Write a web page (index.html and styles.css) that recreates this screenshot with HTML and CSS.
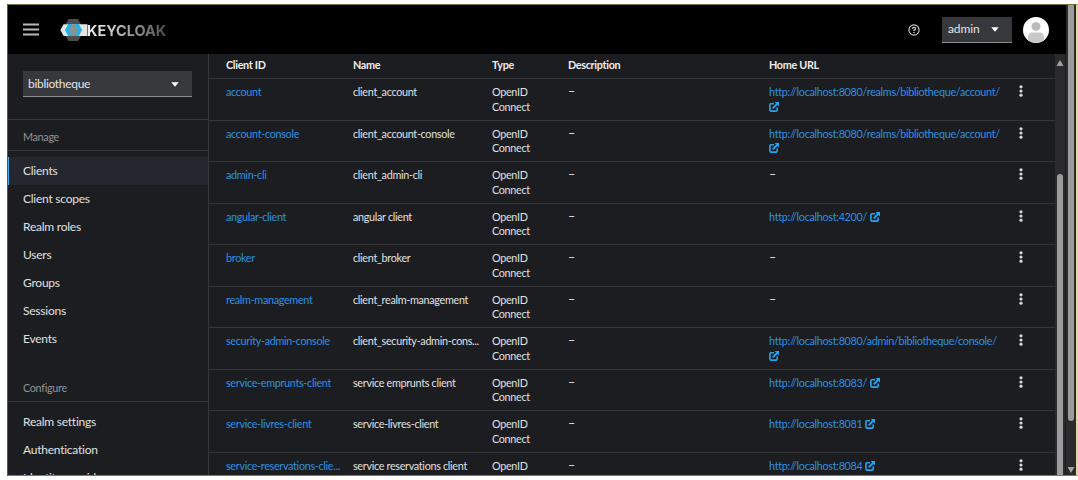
FILE: index.html
```
<!DOCTYPE html>
<html lang="en">
<head>
<meta charset="utf-8">
<title>Keycloak Administration Console</title>
<link rel="stylesheet" href="styles.css">
</head>
<body>
<svg width="0" height="0" class="defs" aria-hidden="true">
  <symbol id="ext" viewBox="0 0 10 10"><path d="M5 1.8H1.9Q.9 1.8 .9 2.8V8.1Q.9 9.1 1.9 9.1H7.2Q8.2 9.1 8.2 8.1V5.6" fill="none" stroke="currentColor" stroke-width="1.6"/><path d="M3.7 6.3L8 2" stroke="currentColor" stroke-width="1.8"/><path d="M5.6 0H10V4.4Z" fill="currentColor"/></symbol>
  <symbol id="kebab" viewBox="0 0 4 12"><circle cx="2" cy="1.8" r="1.6" fill="currentColor"/><circle cx="2" cy="6" r="1.6" fill="currentColor"/><circle cx="2" cy="10.2" r="1.6" fill="currentColor"/></symbol>
  <symbol id="caret" viewBox="0 0 8 5"><path d="M.3 .3H7.7L4 4.7Z" fill="currentColor"/></symbol>
</svg>
<div class="window">
  <div class="app">
    <header class="masthead">
      <svg class="burger" viewBox="0 0 16 14"><path d="M0 1.5H16M0 6.5H16M0 11.5H16" stroke="#b9b9b9" stroke-width="1.9"/></svg>
      <div class="brand">
        <svg class="mark" viewBox="0 0 28 22"><path d="M8.5 0H18L23 9V13L18 22H8.5L3.6 13V9Z" fill="#4d4d4d"/><path d="M3.6 5.2H27.5V17H3.6L.4 11Z" fill="#e4e4e4"/><path d="M10 5.2H19L22 11L19 17H10L7 11Z" fill="#8b9295"/><path d="M8.2 5H12L8.8 11L12 17H8.2L5 11Z" fill="#1fb4e6"/><path d="M14.5 5H18.3L21.6 11L18.3 17H14.5L17.8 11Z" fill="#1fb4e6"/></svg>
        <span class="wordmark">KEYCLOAK</span>
      </div>
      <svg class="help" viewBox="0 0 12 12"><circle cx="6" cy="6" r="5.1" fill="none" stroke="#d2d2d2" stroke-width="1.1"/><path d="M4.4 4.8Q4.5 3.4 6 3.4Q7.6 3.4 7.6 4.7Q7.6 5.6 6 6.1V7" fill="none" stroke="#d2d2d2" stroke-width="1.2"/><circle cx="6" cy="8.5" r=".8" fill="#d2d2d2"/></svg>
      <div class="select user"><span>admin</span><svg class="caret"><use href="#caret"/></svg></div>
      <svg class="avatar" viewBox="0 0 26 26"><circle cx="13" cy="13" r="13" fill="#fff"/><circle cx="13" cy="9.4" r="4.5" fill="#b9bbbd"/><path d="M5 23.2V20.2Q5 15.4 9.5 15.4H16.5Q21 15.4 21 20.2V23.2Q17.5 26 13 26T5 23.2Z" fill="#c6c8ca"/></svg>
    </header>
    <div class="body">
      <nav class="sidebar">
        <div class="realm"><div class="select"><span>bibliotheque</span><svg class="caret"><use href="#caret"/></svg></div></div>
        <h2 class="group">Manage</h2>
        <ul class="links">
          <li class="current">Clients</li><li>Client scopes</li><li>Realm roles</li><li>Users</li><li>Groups</li><li>Sessions</li><li>Events</li>
        </ul>
        <h2 class="group configure">Configure</h2>
        <ul class="links">
          <li>Realm settings</li><li>Authentication</li><li>Identity providers</li>
        </ul>
      </nav>
      <main class="table">
        <div class="row head"><span>Client ID</span><span>Name</span><span>Type</span><span>Description</span><span>Home URL</span><span></span></div>
        <div class="row"><a>account</a><span>client_account</span><span>OpenID Connect</span><span class="dash">–</span><span class="url"><a>http://localhost:8080/realms/bibliotheque/account/</a> <svg class="ext"><use href="#ext"/></svg></span><svg class="kebab"><use href="#kebab"/></svg></div>
        <div class="row"><a>account-console</a><span>client_account-console</span><span>OpenID Connect</span><span class="dash">–</span><span class="url"><a>http://localhost:8080/realms/bibliotheque/account/</a> <svg class="ext"><use href="#ext"/></svg></span><svg class="kebab"><use href="#kebab"/></svg></div>
        <div class="row"><a>admin-cli</a><span>client_admin-cli</span><span>OpenID Connect</span><span class="dash">–</span><span class="dash">–</span><svg class="kebab"><use href="#kebab"/></svg></div>
        <div class="row"><a>angular-client</a><span>angular client</span><span>OpenID Connect</span><span class="dash">–</span><span class="url"><a>http://localhost:4200/</a> <svg class="ext"><use href="#ext"/></svg></span><svg class="kebab"><use href="#kebab"/></svg></div>
        <div class="row"><a>broker</a><span>client_broker</span><span>OpenID Connect</span><span class="dash">–</span><span class="dash">–</span><svg class="kebab"><use href="#kebab"/></svg></div>
        <div class="row"><a>realm-management</a><span>client_realm-management</span><span>OpenID Connect</span><span class="dash">–</span><span class="dash">–</span><svg class="kebab"><use href="#kebab"/></svg></div>
        <div class="row"><a>security-admin-console</a><span>client_security-admin-cons...</span><span>OpenID Connect</span><span class="dash">–</span><span class="url"><a>http://localhost:8080/admin/bibliotheque/console/</a> <svg class="ext"><use href="#ext"/></svg></span><svg class="kebab"><use href="#kebab"/></svg></div>
        <div class="row"><a>service-emprunts-client</a><span>service emprunts client</span><span>OpenID Connect</span><span class="dash">–</span><span class="url"><a>http://localhost:8083/</a> <svg class="ext"><use href="#ext"/></svg></span><svg class="kebab"><use href="#kebab"/></svg></div>
        <div class="row"><a>service-livres-client</a><span>service-livres-client</span><span>OpenID Connect</span><span class="dash">–</span><span class="url"><a>http://localhost:8081</a> <svg class="ext"><use href="#ext"/></svg></span><svg class="kebab"><use href="#kebab"/></svg></div>
        <div class="row"><a>service-reservations-clie...</a><span>service reservations client</span><span>OpenID</span><span class="dash">–</span><span class="url"><a>http://localhost:8084</a> <svg class="ext"><use href="#ext"/></svg></span><svg class="kebab"><use href="#kebab"/></svg></div>
      </main>
      <div class="scroll inner"><svg class="arrow" viewBox="0 0 8 6"><path d="M4 0L7.5 6H.5Z" fill="#a0a0a0"/></svg><div class="thumb"></div></div>
    </div>
  </div>
  <div class="scroll outer"><div class="thumb"></div><svg class="arrow" viewBox="0 0 8 6"><path d="M4 6L7.5 0H.5Z" fill="#a0a0a0"/></svg></div>
</div>
</body>
</html>
```
FILE: styles.css
```
* { box-sizing: border-box; }
body { margin: 0; width: 1078px; height: 480px; overflow: hidden; padding: 4px 0 0 7px; background: #fff; color: #e0e0e0; font-family: Lato, "Open Sans", sans-serif; font-size: 10.8px; line-height: 14.5px; letter-spacing: -.31px; }
.defs { position: absolute; }
svg { display: block; }
.window { display: flex; width: 1071px; height: 472px; overflow: hidden; background: #1b1d21; border-top: 1px solid #77743e; border-left: 1px solid #55575a; border-right: 2px solid #e5d3a2; border-bottom: 1px solid #77797b; }
.app { display: flex; flex-direction: column; width: 1058px; flex: none; }
.masthead { display: flex; align-items: center; height: 49px; flex: none; padding: 0 18px 0 15px; background: #000; }
.burger { width: 16px; height: 14px; }
.brand { display: flex; align-items: center; margin-left: 21px; }
.mark { width: 28px; height: 22px; }
.wordmark { margin-left: -1px; padding-top: 2px; font-family: Inter, sans-serif; font-size: 14.5px; font-weight: 700; line-height: 20px; letter-spacing: -.05px; background: linear-gradient(90deg, #ededed 5%, #aaa 50%, #4d4d4d); -webkit-background-clip: text; background-clip: text; color: transparent; }
.help { width: 12px; height: 12px; margin-left: auto; margin-right: 22px; }
.select { display: flex; align-items: center; justify-content: space-between; height: 26px; background: #37383b; border-bottom: 1px solid #8a8c8e; color: #e3e3e3; font-size: 12px; }
.caret { width: 8px; height: 5px; color: #fff; }
.user { width: 70px; padding: 1px 13px 0 6px; letter-spacing: -.1px; }
.avatar { width: 26px; height: 26px; margin-left: 11px; margin-right: -1px; }
.body { display: flex; flex: 1; min-height: 0; }
.sidebar { width: 201px; flex: none; overflow: hidden; border-right: 1px solid #35373b; }
.realm { height: 66px; padding: 17px 16px 0 15px; border-bottom: 1px solid #35373b; }
.realm .select { padding: 1px 13px 0 5px; }
.group { display: flex; align-items: center; height: 31px; margin: 0; padding: 5px 15px 0; border-bottom: 1px solid #35373b; font-size: 10.8px; font-weight: 400; color: #929497; }
.configure { height: 49px; padding-top: 23px; }
.links { margin: 0; padding: 6px 0 0; list-style: none; font-size: 12px; letter-spacing: -.24px; }
.links li { display: flex; align-items: center; height: 28px; padding-left: 15px; }
.links .current { padding-left: 14px; border-left: 1px solid #4aa8ee; background: #25272e; }
.table { width: 846px; flex: none; overflow: hidden; }
.row { display: grid; grid-template-columns: 127px 139px 76px 201px 250px 1fr; height: 41.5px; padding: 6px 0 0 17px; border-bottom: 1px solid #34363a; }
.row > :nth-child(1), .row > :nth-child(2), .url a { white-space: nowrap; }
.row > :nth-child(3) { width: 50px; }
.row > .dash { font-size: 12.5px; }
.head { height: 25px; padding-top: 4px; font-weight: 700; color: #ececec; }
a { color: #2c91e0; }
.ext { display: inline-block; width: 10px; height: 10px; vertical-align: -1px; color: #27a5f0; }
.url { width: 230px; }
.kebab { width: 4px; height: 12px; color: #d8d8d8; }
.scroll { display: flex; flex-direction: column; align-items: center; flex: none; background: #2b2b2d; }
.inner { width: 10px; }
.inner .arrow { margin-top: 6px; }
.arrow { width: 8px; height: 6px; }
.thumb { width: 6px; border-radius: 3px; background: #9c9c9c; }
.inner .thumb { flex: 1; margin-top: 108px; border-radius: 3px 3px 0 0; }
.outer { width: 10px; }
.outer .thumb { height: 416px; border-radius: 0 0 3px 3px; }
.outer .arrow { margin-top: 46px; }
```
